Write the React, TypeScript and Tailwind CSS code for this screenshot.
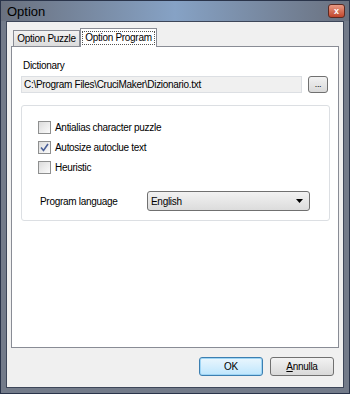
import { useState } from "react"

function CheckRow({ label, checked, onToggle }: { label: string; checked: boolean; onToggle: () => void }) {
  return (
    <div className="flex items-center h-[13px] cursor-default" onClick={onToggle}>
      <div className="w-[13px] h-[13px] border border-[#8e8f8f] bg-gradient-to-br from-[#dcdcdc] to-[#fbfbfb] flex items-center justify-center">
        {checked && (
          <svg width="9" height="9" viewBox="0 0 9 9">
            <path d="M1 4.5 L3.5 7.5 L8 1" fill="none" stroke="#4a5f97" strokeWidth="1.6" />
          </svg>
        )}
      </div>
      <span className="ml-[4px] text-[10px] tracking-[-0.3px] text-black">{label}</span>
    </div>
  )
}

function App() {
  const [tab, setTab] = useState(1)
  const [checks, setChecks] = useState([false, true, false])

  const toggle = (i: number) => setChecks(checks.map((c, j) => (j === i ? !c : c)))

  return (
    <div className="w-[350px] h-[394px] flex flex-col bg-[#737b8a] border border-[#2a344a] font-['Liberation_Sans',Arial,sans-serif] select-none">
      {/* title bar */}
      <div className="h-[20px] flex items-center justify-between pl-[6px] pr-[4px] bg-gradient-to-r from-[#6a717f] via-[#86a2c5] to-[#6a717f]">
        <span className="text-[13px] text-black leading-none">Option</span>
        <div className="w-[17px] h-[14px] rounded-[3px] border border-[#5c2a22] bg-gradient-to-b from-[#e79a84] to-[#c1442a] flex items-center justify-center">
          <span className="text-[9px] font-bold text-white leading-none">x</span>
        </div>
      </div>

      {/* client area */}
      <div className="flex-1 mx-[5px] mb-[5px] border border-[#3d4659] bg-[#f0f0f0] flex flex-col px-[4px] text-[10px] tracking-[-0.3px]">
        {/* tabs */}
        <div className="flex items-end h-[24px] pl-[2px]">
          <div
            onClick={() => setTab(0)}
            className={
              tab === 0
                ? "w-[68px] h-[19px] bg-white border border-b-0 border-[#898c95] flex items-center justify-center -mb-px z-10"
                : "w-[67px] h-[16px] bg-gradient-to-b from-[#f2f2f2] to-[#dcdcdc] border border-b-0 border-[#898c95] flex items-center justify-center"
            }
          >
            Option Puzzle
          </div>
          <div
            onClick={() => setTab(1)}
            className={
              tab === 1
                ? "w-[77px] h-[19px] bg-white border border-b-0 border-[#898c95] flex items-center justify-center -mb-px z-10"
                : "w-[76px] h-[16px] bg-gradient-to-b from-[#f2f2f2] to-[#dcdcdc] border border-b-0 border-[#898c95] flex items-center justify-center"
            }
          >
            <span className="border border-dotted border-[#555] px-[2px] leading-[12px]">Option Program</span>
          </div>
        </div>

        {/* tab panel */}
        <div className="h-[302px] bg-white border border-[#898c95] px-[9px] pt-[13px]">
          <div className="text-black leading-[12px] pl-[2px]">Dictionary</div>
          <div className="flex items-center mt-[4px]">
            <div className="w-[281px] h-[17px] bg-[#f0f0f0] border border-[#dcdfe3] flex items-center pl-[2px]">
              C:\Program Files\CruciMaker\Dizionario.txt
            </div>
            <div className="ml-[6px] w-[20px] h-[17px] rounded-[3px] border border-[#707070] bg-gradient-to-b from-[#f2f2f2] to-[#d9d9d9] text-[9px] flex items-end justify-center pb-[3px] leading-none">
              ...
            </div>
          </div>

          <div className="mt-[12px] w-[309px] h-[116px] border border-[#dcdfe3] rounded-[3px] pl-[16px] pt-[15px]">
            <div className="flex flex-col gap-[7px]">
              <CheckRow label="Antialias character puzzle" checked={checks[0]} onToggle={() => toggle(0)} />
              <CheckRow label="Autosize autoclue text" checked={checks[1]} onToggle={() => toggle(1)} />
              <CheckRow label="Heuristic" checked={checks[2]} onToggle={() => toggle(2)} />
            </div>
            <div className="flex items-center mt-[17px] pl-[2px]">
              <span className="w-[107px] text-black">Program language</span>
              <div className="w-[163px] h-[20px] rounded-[3px] border border-[#707070] bg-gradient-to-b from-[#f2f2f2] to-[#dcdcdc] flex items-center justify-between pl-[3px] pr-[6px]">
                <span className="text-black">English</span>
                <svg width="7" height="4" viewBox="0 0 7 4">
                  <path d="M0 0 L7 0 L3.5 4 Z" fill="#000" />
                </svg>
              </div>
            </div>
          </div>
        </div>

        {/* buttons */}
        <div className="flex justify-end gap-[7px] pt-[9px] pr-[5px]">
          <button className="w-[64px] h-[19px] rounded-[3px] border border-[#3c7fb1] bg-gradient-to-b from-[#eaf6fd] to-[#bee6fd] text-black shadow-[inset_0_0_0_1px_#9ed5f5]">
            OK
          </button>
          <button className="w-[64px] h-[19px] rounded-[3px] border border-[#707070] bg-gradient-to-b from-[#f2f2f2] to-[#d9d9d9] text-black">
            <span className="underline">A</span>nnulla
          </button>
        </div>
      </div>
    </div>
  )
}

export default App
